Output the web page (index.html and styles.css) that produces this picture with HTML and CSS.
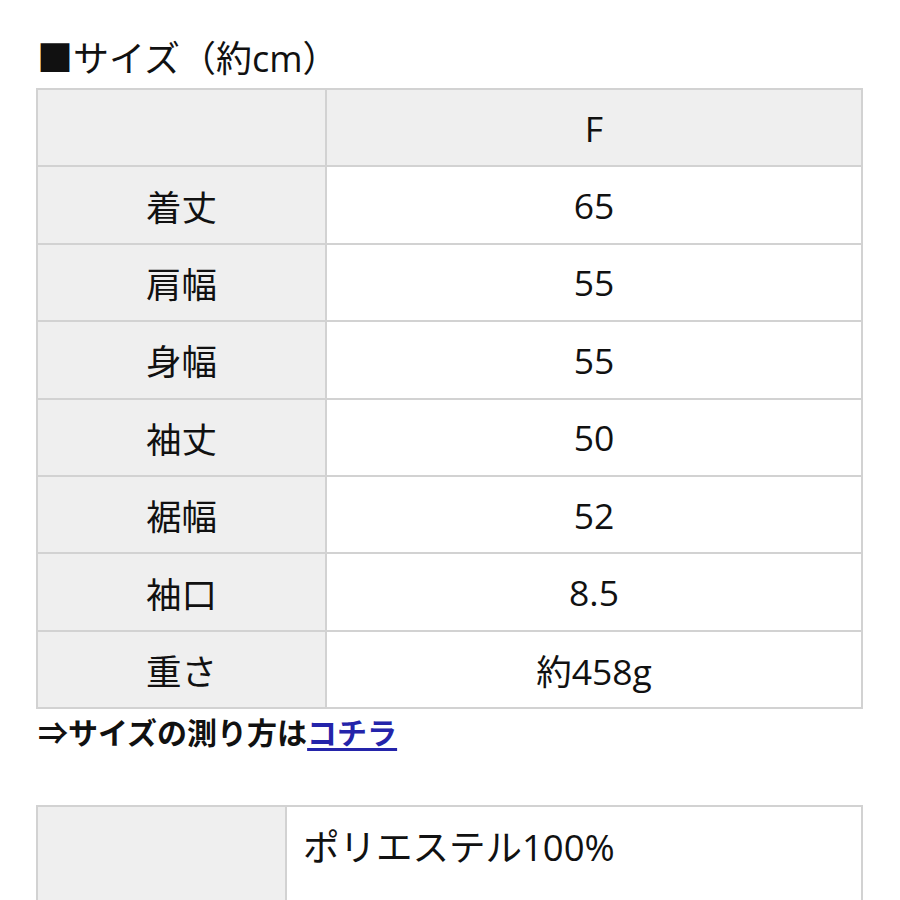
FILE: index.html
```html
<!DOCTYPE html>
<html lang="ja">
<head>
<meta charset="utf-8">
<link rel="stylesheet" href="styles.css">
</head>
<body>
<div class="page">
  <h2 class="title">■サイズ（約cm）</h2>
  <table class="size">
    <tr class="head"><th class="label"></th><th class="val">F</th></tr>
    <tr><th class="label">着丈</th><td class="val">65</td></tr>
    <tr><th class="label">肩幅</th><td class="val">55</td></tr>
    <tr><th class="label">身幅</th><td class="val">55</td></tr>
    <tr><th class="label">袖丈</th><td class="val">50</td></tr>
    <tr><th class="label">裾幅</th><td class="val">52</td></tr>
    <tr><th class="label">袖口</th><td class="val">8.5</td></tr>
    <tr><th class="label">重さ</th><td class="val">約458g</td></tr>
  </table>
  <p class="howto">⇒サイズの測り方は<a href="#" class="link">コチラ</a></p>
  <table class="material">
    <tr><th class="mlabel"></th><td class="mval">ポリエステル100%</td></tr>
  </table>
</div>
</body>
</html>
```
FILE: styles.css
```css
html, body {
  margin: 0;
  padding: 0;
  background: #fff;
}
body {
  font-family: "Open Sans", "Noto Sans CJK JP", "Noto Sans", sans-serif;
  color: #111;
}
.page {
  padding: 34px 37px 0 36px;
}
.title {
  margin: 0 0 4px 1px;
  font-size: 36px;
  font-weight: 400;
  line-height: 50px;
}
.size, .material {
  width: 827px;
  border-collapse: collapse;
  table-layout: fixed;
}
.size th, .size td, .material th, .material td {
  border: 2px solid #d2d2d2;
  padding: 0;
  font-weight: 400;
  font-size: 35.5px;
  text-align: center;
  height: 75.4px;
}
.size .label {
  width: 287px;
  background: #efefef;
}
.size .head .val {
  background: #efefef;
}
.size td.val {
  background: #fff;
}
.howto {
  margin: 2px 0 0 2px;
  font-size: 30px;
  font-weight: 700;
  line-height: 44px;
  color: #111;
}
.link {
  color: #2424aa;
  text-decoration: underline;
  text-underline-offset: 4px;
}
.material {
  margin-top: 50px;
}
.material .mlabel {
  width: 247px;
  background: #efefef;
  height: 100px;
}
.material .mval {
  text-align: left;
  padding: 0 0 24px 16px;
  font-size: 36.5px;
  vertical-align: middle;
}
```
